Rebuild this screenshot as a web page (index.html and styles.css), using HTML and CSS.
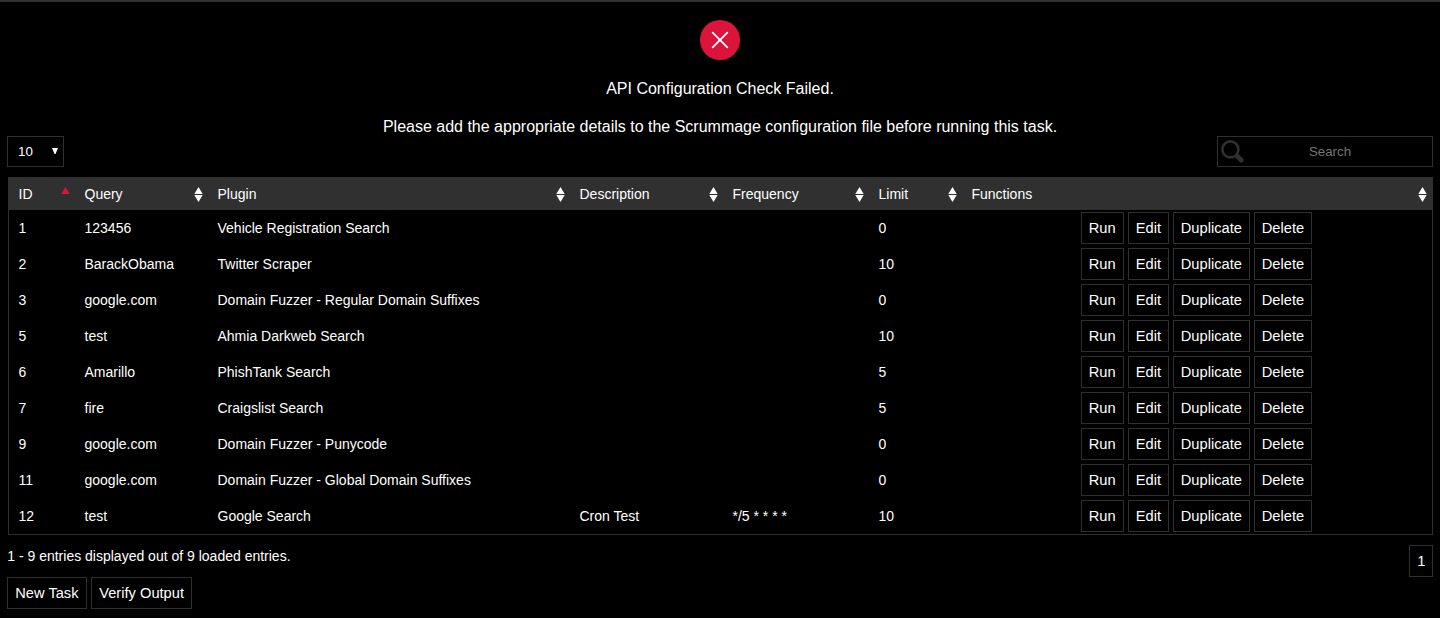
FILE: index.html
```
<!DOCTYPE html>
<html lang="en">
<head>
<meta charset="utf-8">
<title>Tasks</title>
<link rel="stylesheet" href="styles.css">
<script src="tasks.js" defer></script>
</head>
<body>
<header class="notice">
  <svg class="notice-icon" width="40" height="40" viewBox="0 0 40 40"><circle cx="20" cy="20" r="20" fill="#dc143c"/><path d="M12.7 12.7L27.3 27.3M27.3 12.7L12.7 27.3" stroke="#fff" stroke-width="1.8" stroke-linecap="round"/></svg>
  <p class="notice-line">API Configuration Check Failed.</p>
  <p class="notice-line">Please add the appropriate details to the Scrummage configuration file before running this task.</p>
</header>
<div class="toolbar">
  <div class="length"><span>10</span><svg class="caret" width="6" height="6" viewBox="0 0 6 6"><path d="M0 0H6L3.5 6H2.5Z" fill="#fff"/></svg></div>
  <div class="search">
    <svg class="search-icon" width="24" height="24" viewBox="0 0 24 24" fill="none" stroke="#303030"><circle cx="9.4" cy="9.4" r="8" stroke-width="2.6"/><path d="M14.5 14.5L17 17" stroke-width="3.6"/><path d="M16 16L20.4 20.2" stroke-width="4.8" stroke-linecap="round"/></svg>
    <span class="search-text">Search</span>
  </div>
</div>
<main class="table">
  <div class="row head" id="head"></div>
  <div id="rows"></div>
</main>
<div class="summary">
  <span class="info">1 - 9 entries displayed out of 9 loaded entries.</span>
  <a class="btn page">1</a>
</div>
<div class="actions"><a class="btn new">New Task</a><a class="btn verify">Verify Output</a></div>
</body>
</html>
```

FILE: styles.css
```
* { box-sizing: border-box; }
body {
  margin: 0;
  height: 618px;
  overflow: hidden;
  border-top: 2px solid #303030;
  background: #000;
  color: #fff;
  font-family: "Liberation Sans", Arial, sans-serif;
  font-size: 14px;
}
.notice { height: 134px; padding-top: 18px; text-align: center; }
.notice-icon { display: block; margin: 0 auto 20px; }
.notice-line { margin: 0 0 20px; font-size: 16px; line-height: 18px; }
.toolbar { display: flex; justify-content: space-between; height: 31px; margin: 0 7px; }
.length {
  display: flex;
  align-items: center;
  justify-content: space-between;
  width: 57px;
  padding: 0 5px 0 10px;
  border: 1px solid #303030;
  font-size: 13.333px;
}
.caret { margin-bottom: 1px; }
.search {
  display: flex;
  align-items: center;
  width: 216px;
  border: 1px solid #303030;
  color: #757575;
  font-size: 13.333px;
}
.search-icon { margin-left: 3px; }
.search-text { flex: 1; padding-right: 17px; text-align: center; }
.table { width: 1425px; height: 358px; margin: 10px 0 0 8px; border: 1px solid #303030; border-top: 0; }
.row { display: grid; grid-template-columns: 65.5px 133px 362px 153px 146px 93px 1fr; height: 36px; line-height: 36px; }
.head { height: 33px; margin: 0 -1px; padding: 0 1px; background: #303030; line-height: 34px; }
.cell { padding-left: 10px; white-space: nowrap; }
.cell:first-child { padding-left: 9.5px; }
.head .cell { display: flex; justify-content: space-between; }
.sort { margin: 10px 5px 0 0; }
.functions { display: flex; justify-content: center; align-items: center; gap: 4px; }
.btn {
  display: block;
  height: 32px;
  padding-left: 7.25px;
  border: 1px solid #303030;
  font-size: 14.667px;
  line-height: 30px;
  white-space: nowrap;
}
.run { width: 43px; }
.edit { width: 41px; }
.duplicate { width: 77px; }
.delete { width: 58px; }
.functions .btn { padding-left: 6.5px; }
.summary { display: flex; justify-content: space-between; margin: 10px 7px 0; }
.info { padding-left: 0.25px; line-height: 22px; }
.page { width: 24px; }
.actions { display: flex; gap: 4px; margin-left: 7px; }
.new { width: 80px; }
.verify { width: 101px; }
```

FILE: tasks.js
```
const columns = ["ID", "Query", "Plugin", "Description", "Frequency", "Limit", "Functions"];
const tasks = [
  ["1", "123456", "Vehicle Registration Search", "", "", "0"],
  ["2", "BarackObama", "Twitter Scraper", "", "", "10"],
  ["3", "google.com", "Domain Fuzzer - Regular Domain Suffixes", "", "", "0"],
  ["5", "test", "Ahmia Darkweb Search", "", "", "10"],
  ["6", "Amarillo", "PhishTank Search", "", "", "5"],
  ["7", "fire", "Craigslist Search", "", "", "5"],
  ["9", "google.com", "Domain Fuzzer - Punycode", "", "", "0"],
  ["11", "google.com", "Domain Fuzzer - Global Domain Suffixes", "", "", "0"],
  ["12", "test", "Google Search", "Cron Test", "*/5 * * * *", "10"]
];
const sortIcon = (active) =>
  `<svg class="sort" width="9" height="15" viewBox="0 0 9 15">` +
  (active ? `<path d="M0.3 7L4.5 0L8.7 7Z" fill="#dc143c"/>`
          : `<path d="M0.3 7L4.5 0L8.7 7ZM0.3 8H8.7L4.5 15Z" fill="#fff"/>`) + `</svg>`;
document.getElementById("head").innerHTML = columns
  .map((name, i) => `<div class="cell"><span>${name}</span>${sortIcon(i === 0)}</div>`).join("");
const buttons = ["Run", "Edit", "Duplicate", "Delete"]
  .map((name) => `<a class="btn ${name.toLowerCase()}">${name}</a>`).join("");
document.getElementById("rows").innerHTML = tasks
  .map((task) => `<div class="row">${task.map((text) => `<div class="cell">${text}</div>`).join("")}<div class="functions">${buttons}</div></div>`)
  .join("");
```
